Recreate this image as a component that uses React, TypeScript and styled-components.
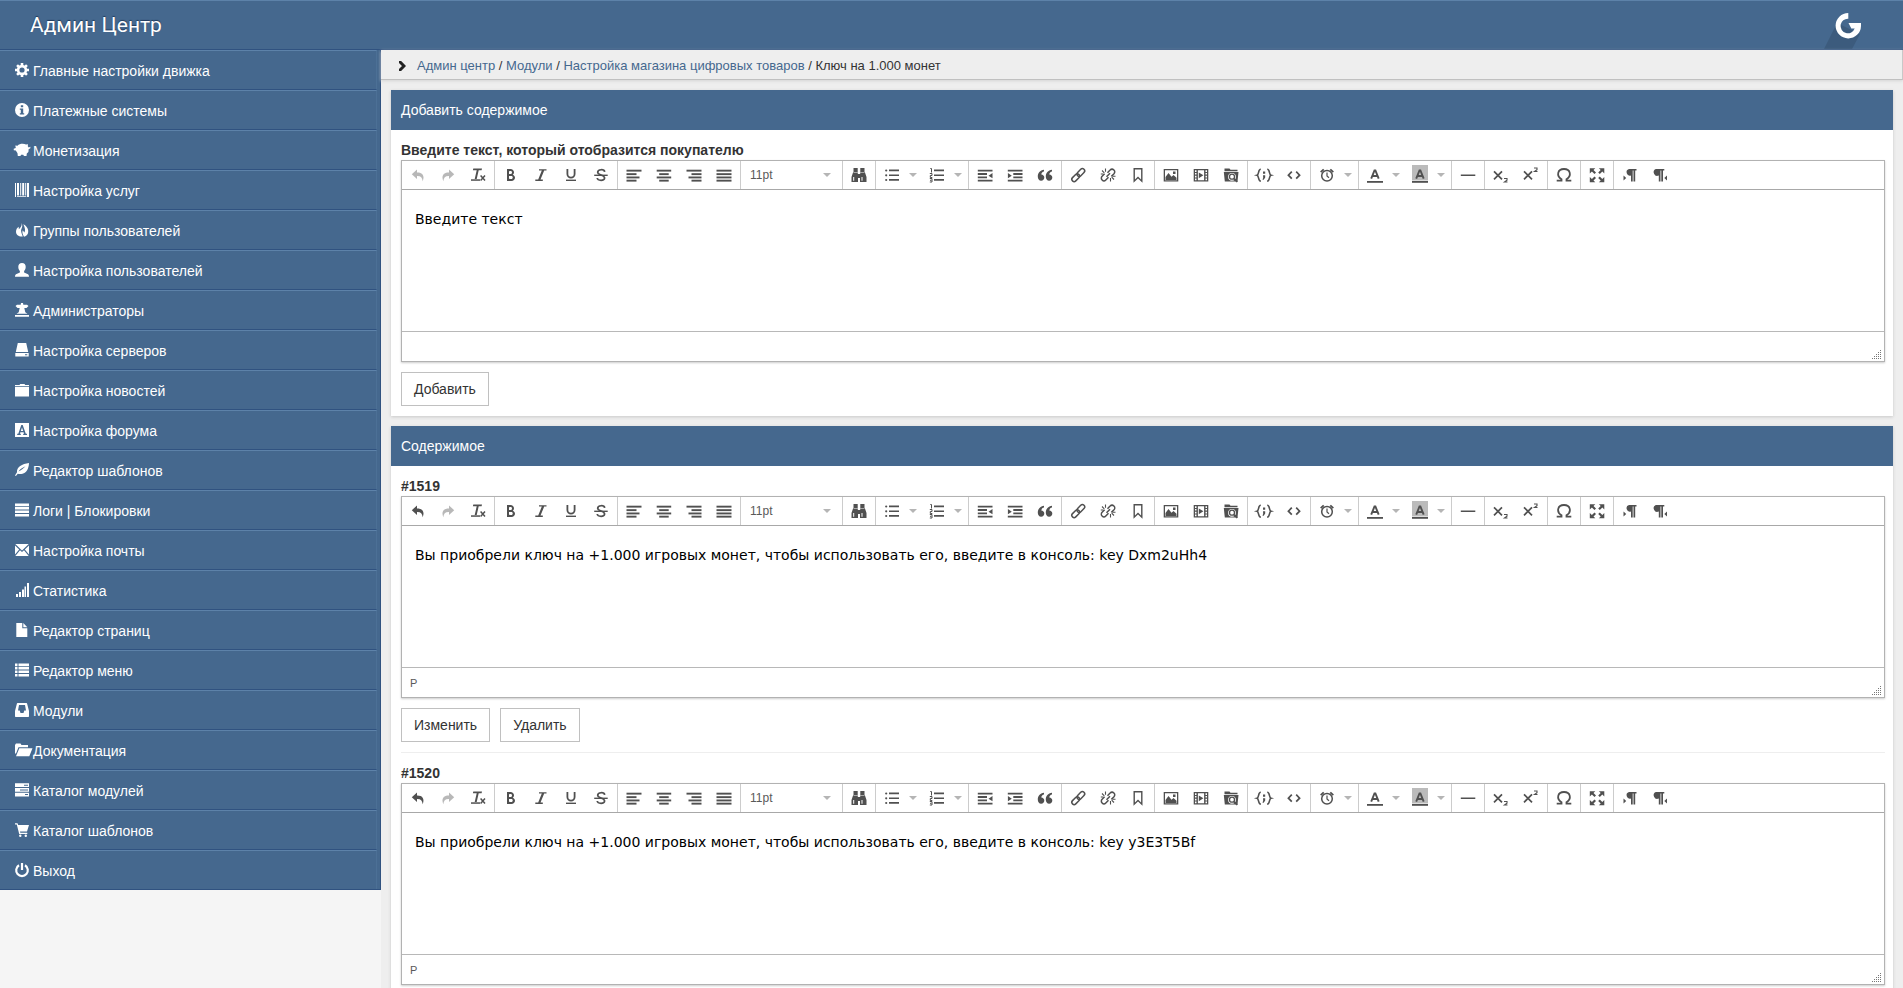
import React from "react";
import styled, { createGlobalStyle, css } from "styled-components";

const GlobalStyle = createGlobalStyle`
  *, *::before, *::after { box-sizing: border-box; }
  html { scrollbar-width: none; }
  body {
    margin: 0;
    background: #f5f5f5;
    color: #333;
    font-family: "Liberation Sans", Arial, sans-serif;
    font-size: 14px;
    line-height: 20px;
  }
  button, select, textarea { font: inherit; color: inherit; border-radius: 0; }
`;

const BLUE = "#45688e";
const LINE_LIGHT = "#5d82a9";
const LINE_DARK = "#305280";
const ICON = "#505050";

/* ---------- page frame ---------- */

const Page = styled.div`
  display: flex;
  flex-direction: column;
  min-height: 100vh;
`;

const Header = styled.header`
  display: flex;
  flex: none;
  align-items: center;
  justify-content: space-between;
  height: 50px;
  padding: 0 29px 0 30px;
  background: ${BLUE};
  border-top: 1px solid ${LINE_LIGHT};
  border-bottom: 1px solid ${LINE_DARK};
`;

const Brand = styled.a`
  color: #fff;
  font-family: Roboto, "Arial Narrow", sans-serif;
  font-size: 21px;
  line-height: 48px;
  text-decoration: none;
  text-shadow: 0 -1px 1px #1f3a5c;
`;

const LogoLink = styled.a`
  display: block;
  height: 48px;
`;

const Columns = styled.div`
  display: flex;
  flex: 1;
`;

const Sidebar = styled.nav`
  flex: none;
  width: 381px;
`;

const Menu = styled.ul`
  list-style: none;
  margin: 0;
  padding: 0 3px 0 0;
  background: ${BLUE};
  border-right: 1px solid ${LINE_DARK};
  border-bottom: 1px solid ${LINE_DARK};
`;

const MenuLink = styled.a`
  display: flex;
  align-items: center;
  gap: 4px;
  height: 40px;
  padding: 0 15px;
  color: #fff;
  text-decoration: none;
  border-top: 1px solid ${LINE_LIGHT};
  border-right: 1px solid #4c7096;
  border-bottom: 1px solid ${LINE_DARK};

  li:last-child > & { height: 39px; border-bottom: 0; }

  svg { flex: none; overflow: visible; }
`;

const MenuText = styled.span`
  padding-top: 2px;
`;

const Main = styled.main`
  flex: 1;
  min-width: 0;
  background: #eee;
`;

const Breadcrumb = styled.nav`
  display: flex;
  align-items: center;
  height: 30px;
  padding: 2px 18px 0;
  font-size: 13px;
  color: #333;
  border-right: 1px solid #c8c8c8;
  border-bottom: 1px solid #c0c0c0;
  box-shadow: 0 1px 3px #d4d4d4;

  svg { margin-right: 11px; }
  a { color: ${BLUE}; text-decoration: none; }
`;

const Separator = styled.span`
  white-space: pre;
`;

/* ---------- panels ---------- */

const Panel = styled.section`
  margin: 10px;
  background: #fff;
  box-shadow: 0 1px 3px #c8c8c8;
`;

const PanelTitle = styled.h2`
  margin: 0;
  padding: 10px;
  background: ${BLUE};
  color: #fff;
  font-size: 14px;
  font-weight: 400;
  line-height: 20px;
`;

const Entry = styled.div`
  margin: 0 8px 0 10px;
  padding: 10px 0;

  & + & { border-top: 1px solid #eee; }
`;

const EntryLabel = styled.label`
  display: block;
  font-weight: 700;
`;

const Actions = styled.div`
  display: flex;
  gap: 10px;
  margin-top: 10px;
`;

const Button = styled.button`
  height: 34px;
  padding: 0 12px;
  background: #fff;
  border: 1px solid #c0c0c0;
  cursor: pointer;
`;

/* ---------- editor ---------- */

const EditorBox = styled.div`
  border: 1px solid #b2b2b2;
  background: #fff;
  box-shadow: 0 1px 2px #ccc;
`;

const Toolbar = styled.div`
  display: flex;
  height: 29px;
  border-bottom: 1px solid #a8a8a8;
`;

const Group = styled.div`
  display: flex;
  align-items: stretch;
  padding: 0 1px;

  & + & { border-left: 1px solid #ccc; }
`;

const ToolButton = styled.button<{ $split?: boolean; $disabled?: boolean }>`
  display: flex;
  align-items: center;
  width: 30px;
  padding: 0 7px;
  background: none;
  border: 0;
  color: ${ICON};
  cursor: pointer;

  svg { flex: none; }

  ${(p) => p.$split && css`
    width: 45px;
    gap: 9px;
  `}
  ${(p) => p.$disabled && css`
    opacity: 0.4;
    cursor: default;
  `}
`;

const SizeField = styled.div`
  display: flex;
  align-items: center;
  width: 99px;
  padding-right: 10px;
`;

const SizeSelect = styled.select`
  appearance: none;
  flex: 1;
  height: 28px;
  padding: 0 8px;
  background: none;
  border: 0;
  outline: 0;
  color: #595959;
  font-size: 12px;
`;

const TextArea = styled.textarea`
  display: block;
  width: 100%;
  height: 141px;
  padding: 20px 13px;
  background: #fff;
  border: 0;
  outline: 0;
  resize: none;
  color: #000;
  font-family: "DejaVu Sans", Verdana, sans-serif;
  font-size: 14px;
  line-height: 18px;
`;

const StatusBar = styled.div`
  display: flex;
  align-items: center;
  justify-content: space-between;
  height: 30px;
  padding: 0 2px 0 8px;
  border-top: 1px solid #b8b8b8;
  color: #595959;
  font-size: 11px;

  svg { align-self: flex-end; margin-bottom: 1px; }
`;

/* ---------- drawings ---------- */

const Caret = () => (
  <svg width="8" height="4" viewBox="0 0 8 4" aria-hidden="true"><path d="M0 0h8L4 4z" fill="#b5b5b5" /></svg>
);

const Grip = () => (
  <svg width="11" height="11" viewBox="0 0 11 11" fill="#777" aria-hidden="true">
    {[0, 1, 2, 3, 4].map((row) =>
      Array.from({ length: row + 1 }, (_, i) => (
        <rect key={`${row}-${i}`} x={9 - i * 2} y={1 + row * 2} width="1" height="1" />
      ))
    )}
  </svg>
);

const Logo = () => (
  <svg width="50" height="48" viewBox="0 0 50 48" role="img" aria-label="G">
    <path d="M13 22L0 48H28L36 33z" fill="#3c5b7d" />
    <path d="M24.300 12V17.700a7.300 7.300 0 1 0 6.400 9.800H27.300L24.500 22H37V25A12.700 12.700 0 1 1 24.300 12z" fill="#fff" />
  </svg>
);

const tool = (body: React.ReactNode) => (
  <svg width="16" height="16" viewBox="0 0 16 16" fill="currentColor" overflow="visible" aria-hidden="true">{body}</svg>
);
const s = { fill: "none", stroke: "currentColor" } as const;
const rows = (list: [number, number, number][]) =>
  tool(list.map(([x, y, w], i) => <rect key={i} x={x} y={y} width={w} height="1.900" />));
const big = (d: string) => tool(<path transform="scale(.015625)" d={d} />);

const icons = {
  undo: tool(<path d="M1.800 7.200L7 2.500V5.400C12.500 5.300 15 8.700 12.600 14.300 12.500 10.500 10.500 8.900 7 9.100V12z" />),
  redo: tool(<path d="M14.200 7.200L9 2.500V5.400C3.500 5.300 1 8.700 3.400 14.300 3.500 10.500 5.500 8.900 9 9.100V12z" />),
  clear: tool(<><path d="M3.300 1.500H12L11.600 3.300H8.700L6.700 12H4.700L6.700 3.300H2.900z" /><path d="M1 12.300h9v1.500H1z" /><path {...s} strokeWidth="1.500" d="M10.600 8.600l4.400 4.900M15 8.600l-4.400 4.900" /></>),
  bold: big("M625.442 494.182c48.074-38.150 78.558-94.856 78.558-158.182 0-114.876-100.290-208-224-208h-224v768h288c123.712 0 224-93.124 224-208 0-88.196-59.118-163.562-142.558-193.818zM384 304c0-26.510 21.490-48 48-48h67.204c42.414 0 76.796 42.980 76.796 96s-34.382 96-76.796 96h-115.204v-144zM547.200 768h-115.200c-26.510 0-48-21.490-48-48v-144h163.200c42.418 0 76.800 42.980 76.800 96s-34.382 96-76.800 96z"),
  italic: tool(<path d="M6 2.200h7.500v1.400h-2.300L7.500 12.600h2.300V14H2.300v-1.400h2.900L8.800 3.600H6z" />),
  underline: tool(<><path {...s} strokeWidth="1.800" d="M4.400 2v5a3.600 3.600 0 0 0 7.200 0V2" /><path d="M3 12.600h10V14H3z" /></>),
  strike: tool(<><path {...s} strokeWidth="1.700" d="M11.700 4.800C11.300 2 4.700 1.900 4.700 5.300 4.700 8.400 11.600 7.500 11.600 10.900 11.600 14.200 4.600 14 4.200 11" /><path d="M1.200 7.600h13.500v1.400H1.200z" /></>),
  left: rows([[0.5, 2.7, 15], [0.5, 6.2, 10], [0.5, 9.5, 13], [0.5, 12.7, 10]]),
  center: rows([[0.7, 2.7, 14.5], [3.2, 6.2, 9.5], [0.7, 9.5, 14.5], [3.2, 12.7, 9.5]]),
  right: rows([[0.5, 2.7, 15], [5.5, 6.2, 10], [2.5, 9.5, 13], [5.5, 12.7, 10]]),
  justify: rows([[0.5, 2.7, 15], [0.5, 6.2, 15], [0.5, 9.5, 15], [0.5, 12.7, 15]]),
  find: tool(<path fillRule="evenodd" d="M2.500 1h4.200v4.500H2.500zM9.300 1h4.200v4.500H9.300zM2.200 5h4.600v2h2.400V5h4.600L15.500 10v5H9v-4H7v4H.5v-5zM2.200 10v3.700h1V10zM10.500 10v3.700h1V10z" />),
  bullets: tool(<><circle cx="2.200" cy="3.500" r="1.100" /><circle cx="2.200" cy="8.300" r="1.100" /><circle cx="2.200" cy="13" r="1.100" /><path d="M5 2.600h10v1.700H5zM5 7.400h10v1.700H5zM5 12.100h10v1.700H5z" /></>),
  numbers: tool(<><path {...s} strokeWidth="1" d="M1.300 1.500h1.200v4M.8 6.500h2.200v2h-1.700v2h2M.8 11.500h2.200v3.500h-2.200M1 13.300h1.500" /><path d="M5 2.600h10v1.700H5zM5 7.400h10v1.700H5zM5 12.100h10v1.700H5z" /></>),
  outdent: tool(<path d="M.8 2.700h14.700v1.900H.8zM.8 6.100H10V8H.8zM.8 9.400H10v1.900H.8zM.8 12.700h14.700v1.900H.8zM15.500 6v5.300L11.500 8.700z" />),
  indent: tool(<path d="M.8 2.700h14.700v1.900H.8zM6.300 6.100h9.200V8H6.300zM6.300 9.400h9.200v1.900H6.300zM.8 12.700h14.700v1.900H.8zM.9 6v5.300l3.900-2.600z" />),
  quote: tool(<path d="M7 2.800C3 3.300.8 6 .8 9.700c0 2.300 1.400 4 3.300 4s3.200-1.300 3.200-3.200S6 7.500 4.300 7.400C4.500 5.800 5.500 4.800 7 4.500zM15 2.800c-4 .5-6.200 3.200-6.200 6.900 0 2.300 1.400 4 3.300 4s3.200-1.300 3.200-3.200-1.300-3-3-3.100c.2-1.600 1.200-2.600 2.700-2.900z" />),
  link: tool(<g {...s} strokeWidth="1.500"><rect x="6.300" y="3.200" width="9" height="4.600" rx="2.300" transform="rotate(-45 10.800 5.500)" /><rect x="1.200" y="8.400" width="9" height="4.600" rx="2.300" transform="rotate(-45 5.700 10.700)" /></g>),
  unlink: tool(<g {...s} strokeWidth="1.500"><path d="M7.500 5.700l2.600-2.600a2.600 2.600 0 0 1 3.900 3.700l-2.600 2.600M8.500 10.300l-2.700 2.700a2.600 2.600 0 0 1-3.700-3.700l2.500-2.500M6.500 9.800l3.500-3.500" /><path strokeWidth="1.100" d="M5.500 4.800V1.500M4.300 5.800L2 3.500M3.300 7H.8M10.500 11v3.500M11.700 10.200l2.300 2.300M12.500 9.200h3" /></g>),
  anchor: tool(<path {...s} strokeWidth="1.400" d="M4.200 1.700h7.600v12.500L8 10.500l-3.800 3.700z" />),
  image: tool(<path fillRule="evenodd" d="M.7 2h14.600v12.500H.7zM2 3.300v9.900h12V3.300zM2.500 13V10l3-4 3 3.700 2-1.700 3 2.700V13zM10 4.500h2.500V7H10z" />),
  media: tool(<path fillRule="evenodd" d="M.7 2h14.600v12.500H.7zM2 3.300v1.600h1.500V3.300zM2 6v1.600h1.500V6zM2 8.800v1.600h1.500V8.800zM2 11.600v1.600h1.500v-1.600zM12.500 3.300v1.600H14V3.300zM12.500 6v1.600H14V6zM12.500 8.800v1.600H14V8.800zM12.500 11.600v1.600H14v-1.600zM4.900 3.300v9.900h6.200V3.300zM5.800 5.400l4.600 2.900-4.600 2.900z" />),
  browse: tool(<><path fillRule="evenodd" d="M1.500 1.500h5l1 1.200h7v1.500h-13zM.8 5h14.700l-1 9.500H1.800zM9 5.900a3.900 3.900 0 1 0 0 7.800 3.900 3.900 0 1 0 0-7.800z" /><circle {...s} strokeWidth="1.300" cx="9" cy="9.700" r="2.500" /><path {...s} strokeWidth="1.700" d="M10.800 11.500l3.500 3.300" /></>),
  sample: tool(<><path {...s} strokeWidth="1.600" d="M4.800 2.300c-3 0-1.500 5.300-3.800 5.900 2.300.6.800 5.900 3.800 5.900M11.200 2.300c3 0 1.500 5.300 3.800 5.900-2.300.6-.8 5.900-3.800 5.900" /><path d="M7 4.500h2.200v2.200H7zM7 8.200h2.200v2.300L7.700 12.700H6.500L7.200 10.500z" /></>),
  code: tool(<path {...s} strokeWidth="1.700" d="M5.800 4.700L2.400 8.200l3.400 3.500M10.200 4.700l3.400 3.500-3.400 3.500" />),
  clock: tool(<g {...s}><circle cx="8" cy="8.700" r="5.300" strokeWidth="1.500" /><path strokeWidth="1.200" d="M8 5.500V9l2 1.700" /><path strokeWidth="1.800" d="M1.700 5.200L4.700 2.300M14.300 5.200l-3-2.900" /></g>),
  fore: tool(<><path {...s} strokeWidth="1.900" d="M4.200 11.700L7.500 3.500h.9l3.300 8.200M5.500 9h4.900" /><path d="M0 14h16v1.800H0z" /></>),
  back: tool(<><path fill="#bbb" d="M0-2h16v15.500H0z" /><path {...s} strokeWidth="1.900" d="M4.200 11.700L7.500 3.500h.9l3.300 8.200M5.500 9h4.900" /><path d="M0 14h16v1.800H0z" /></>),
  rule: tool(<path d="M.8 7.500h14.500v1.500H.8z" />),
  sub: tool(<><path {...s} strokeWidth="1.700" d="M1 4.300l8 8M9 4.300l-8 8" /><path {...s} strokeWidth="1.100" d="M11 11.500h3v1.700L11.500 15h3" /></>),
  sup: tool(<><path {...s} strokeWidth="1.700" d="M1 4.300l8 8M9 4.300l-8 8" /><path {...s} strokeWidth="1.100" d="M11 1h3v1.700L11.500 4.500h3" /></>),
  omega: tool(<path {...s} strokeWidth="1.800" d="M.7 13.700h4.800v-1.500C.1 9 1.400 2 8 2s7.900 7 2.500 10.200v1.500h4.800" />),
  full: tool(<path d="M.8 1.200h5.500L4.500 3 7 5.500 5.500 7.100 2.900 4.500.8 6.500zM15.300 1.200v5.300l-2-2-2.500 2.600L9.200 5.500 11.700 3 9.800 1.200zM.8 15.200V10l2.100 1.900L5.500 9.400 7 10.900l-2.500 2.500 1.800 1.800zM15.300 15.200H9.800l1.900-1.800-2.500-2.500 1.600-1.500 2.500 2.500 2-1.900z" />),
  ltr: tool(<path d="M7 2h7.500v1.500h-1.300V14.500H11.500V3.500h-.8V14.500H9V8.500A3.300 3.300 0 0 1 7 2zM1.500 8.500v5l2.700-2.500z" />),
  rtl: tool(<path d="M3.800 2h8.500v1.500H11V14.500H9.300V3.500h-.8V14.500H6.800V8.500A3.300 3.300 0 0 1 3.800 2zM15 8.500v5L12.300 11z" />),
};

const glyph = (body: React.ReactNode) => (
  <svg width="14" height="14" viewBox="0 0 14 14" fill="#fff" aria-hidden="true">{body}</svg>
);
const w = { fill: "none", stroke: "#fff" } as const;

const menu: [string, React.ReactNode][] = [
  ["Главные настройки движка", glyph(<><circle {...w} cx="7" cy="7" r="3.900" strokeWidth="2.600" />{[0, 45, 90, 135].map((a) => <path key={a} transform={`rotate(${a} 7 7)`} d="M5.700 0h2.600v2.500H5.700zM5.700 11.500h2.600V14H5.700z" />)}</>)],
  ["Платежные системы", glyph(<path fillRule="evenodd" d="M7 0a7 7 0 1 1 0 14A7 7 0 0 1 7 0zM5.800 2.300v2h2.400v-2zM4.800 5.500v1.200h1v3.500h-1v1.200h4.400v-1.200h-1V5.500z" />)],
  ["Монетизация", glyph(<path d="M-1.300 5.800L.8 5 .3 2.500 2.500 2.700C4.500.3 9 .2 11 1.500l2-.3-.2 2 .9 1.300 1.800-.7-.3 1.600-1.500.7-.3 3-1.600 1.500L11.500 13H9l-.8-1.300H6L5.500 13H2.800l-.3-2.700L.8 7.500l-2-.2z" />)],
  ["Настройка услуг", glyph(<path d="M0 0h1v14H0zM2 0h2v12.500H2zM5.200 0h1v12.500h-1zM7.200 0h2v12.500h-2zM10.200 0h1v12.500h-1zM12 0h2v14h-2zM2 13.200h9.200v.8H2z" />)],
  ["Группы пользователей", glyph(<path d="M6.700 0c1 2.700.6 4.300-.4 6.300-.8 2 .5 4.500 1.500 7.200C4 14 1 11.800 1 8.700 1 6.600 2 4.800 3.700 3.800l.1 2.400C5.700 4.700 7 2.700 6.700 0zM8.300 1.200C12.300 3.300 14 6.800 13 10.300c-.7 2-2.100 3-4 3.400C7.700 11.500 6.800 9 7.800 7.200l1.500 2.300C10.800 7.500 9.800 4.300 8.300 1.200z" />)],
  ["Настройка пользователей", glyph(<path d="M7 0c2.400 0 3.700 1.500 3.700 3.700 0 2-.7 3.300-1.600 4.300v1.500l3.900 1.700c.7.400 1 1.300 1 2.600H0c0-1.300.3-2.200 1-2.600l3.900-1.700V8c-.9-1-1.600-2.300-1.600-4.300C3.300 1.500 4.600 0 7 0z" />)],
  ["Администраторы", glyph(<path d="M6 0h2l.3 1.700H12l1.500 1.200-2 2H9.300l1 4.300 2.200 1.500H1.500l2.200-1.500 1-4.300H2.500l-2-2L2 1.700h3.700zM0 12h14v1.700H0z" />)],
  ["Настройка серверов", glyph(<path fillRule="evenodd" d="M2.800 0h8.400l2 9H.8zM.3 10h13.400v3.500H.3zM10 11.300v1h2.300v-1z" />)],
  ["Настройка новостей", glyph(<path d="M0 2h4.500l.7-1h4.300l.7 1H14v1.300H0zM0 4h14v9.500H0z" />)],
  ["Настройка форума", glyph(<path fillRule="evenodd" d="M0 0h14v14H0zM6.300 2L3.300 10.800H2.200v1.200h3.600v-1.200H4.900l.5-1.600h3.200l.5 1.600H8.200V12h3.800v-1.200h-1.200L7.700 2zM7 4.500l1.200 3.500H5.800z" />)],
  ["Редактор шаблонов", glyph(<path fillRule="evenodd" d="M14 0c-.3 6-2.500 10-6.500 10.700-2 .4-3.500.2-4.700 0L.9 13 0 12.500l2-3.200C1.500 4 7 .8 14 0zM3.500 8.500C6 7.300 8.500 5.500 10.500 3.300 8 4.500 5.500 5.500 3.500 8.500z" />)],
  ["Логи | Блокировки", glyph(<path d="M0 .6h14v2.600H0zM0 4h14v2.600H0zM0 7.500h14v2.600H0zM0 11h14v2.600H0z" />)],
  ["Настройка почты", glyph(<path d="M.3 1h13.400L7 7.500zM0 2.500L4.200 6.500 0 11.500zM14 2.500L9.800 6.500 14 11.500zM5 7.300l2 1.700 2-1.700 4.700 5.700H.3z" />)],
  ["Статистика", glyph(<path d="M1 11h2v3H1zM4 9h2v5H4zM7 6.500h2V14H7zM9.500 3.500H11V14H9.500zM12 0h2v14h-2z" />)],
  ["Редактор страниц", glyph(<path d="M1.300 0h6v5.300h5V14h-11zM8.300 0l4 4.300h-4z" />)],
  ["Редактор меню", glyph(<path d="M0 .6h2.500v2.600H0zM3.500 .6H14v2.600H3.500zM0 4h2.500v2.600H0zM3.500 4H14v2.600H3.500zM0 7.500h2.500v2.600H0zM3.500 7.500H14v2.600H3.500zM0 11h2.500v2.600H0zM3.500 11H14v2.600H3.500z" />)],
  ["Модули", glyph(<path fillRule="evenodd" d="M3 0h8c.8 0 1 .4 1.200 1L14 8v5c0 .7-.3 1-1 1H1c-.7 0-1-.3-1-1V8l1.800-7C2 .4 2.200 0 3 0zM4 2L3 7.500h1.700L5.500 10h3l.8-2.500H11L10 2z" />)],
  ["Документация", glyph(<path d="M0 2L1 .5h4.500l1 1.500h6.500V4.300H3.500L1 10.500H0zM4.300 5.200H17.500L14.300 13.300H1z" />)],
  ["Каталог модулей", glyph(<path fillRule="evenodd" d="M0 .3h14v3.700H0zM9 1.700v1h4v-1zM0 5h14v3.700H0zM5 6.400v1h8v-1zM0 9.700h14v3.700H0zM10 11.100v1h3v-1z" />)],
  ["Каталог шаблонов", glyph(<><path d="M0 .3h2.500l.7 1.700H14l-2 6.500H5l.3 1.200h7v1.200H4.200L1.800 1.500H0z" /><circle cx="5.300" cy="12.700" r="1.200" /><circle cx="10.800" cy="12.700" r="1.200" /></>)],
  ["Выход", glyph(<><path {...w} strokeWidth="2.200" d="M4 2.300a5.800 5.800 0 1 0 6 0" /><path d="M5.900 0h2.200v7H5.900z" /></>)],
];

/* ---------- editor ---------- */

type Tool = { icon: keyof typeof icons; label: string; split?: boolean };
const t = (icon: keyof typeof icons, label: string, split = false): Tool => ({ icon, label, split });

const firstGroups: Tool[][] = [
  [t("undo", "Вернуть"), t("redo", "Отменить"), t("clear", "Очистить формат")],
  [t("bold", "Полужирный"), t("italic", "Курсив"), t("underline", "Подчеркнутый"), t("strike", "Зачеркнутый")],
  [t("left", "По левому краю"), t("center", "По центру"), t("right", "По правому краю"), t("justify", "По ширине")],
];
const lastGroups: Tool[][] = [
  [t("find", "Найти и заменить")],
  [t("bullets", "Маркированный список", true), t("numbers", "Нумерованный список", true)],
  [t("outdent", "Уменьшить отступ"), t("indent", "Увеличить отступ"), t("quote", "Цитата")],
  [t("link", "Вставить ссылку"), t("unlink", "Удалить ссылку"), t("anchor", "Якорь")],
  [t("image", "Изображение"), t("media", "Видео"), t("browse", "Файлы")],
  [t("sample", "Пример кода"), t("code", "Исходный код")],
  [t("clock", "Дата и время", true)],
  [t("fore", "Цвет текста", true), t("back", "Цвет фона", true)],
  [t("rule", "Горизонтальная линия")],
  [t("sub", "Нижний индекс"), t("sup", "Верхний индекс")],
  [t("omega", "Специальный символ")],
  [t("full", "Полноэкранный режим")],
  [t("ltr", "Слева направо"), t("rtl", "Справа налево")],
];

const ToolGroup = ({ tools, faded }: { tools: Tool[]; faded: string[] }) => (
  <Group>
    {tools.map(({ icon, label, split }) => (
      <ToolButton key={icon} type="button" title={label} aria-label={label} $split={split} $disabled={faded.includes(icon)}>
        {icons[icon]}
        {split && <Caret />}
      </ToolButton>
    ))}
  </Group>
);

const Editor = ({ id, text, path, canUndo }: { id: string; text: string; path?: string; canUndo?: boolean }) => {
  const faded = canUndo ? ["redo"] : ["undo", "redo"];
  return (
    <EditorBox>
      <Toolbar role="toolbar">
        {firstGroups.map((g) => <ToolGroup key={g[0].icon} tools={g} faded={faded} />)}
        <Group>
          <SizeField>
            <SizeSelect aria-label="Размер шрифта" defaultValue="11pt"><option>11pt</option></SizeSelect>
            <Caret />
          </SizeField>
        </Group>
        {lastGroups.map((g) => <ToolGroup key={g[0].icon} tools={g} faded={faded} />)}
      </Toolbar>
      <TextArea id={id} defaultValue={text} spellCheck={false} />
      <StatusBar>
        <span>{path}</span>
        <Grip />
      </StatusBar>
    </EditorBox>
  );
};

const keys = [
  { id: "1519", code: "Dxm2uHh4", actions: ["Изменить", "Удалить"] },
  { id: "1520", code: "y3E3T5Bf", actions: [] },
];

export default function App() {
  return (
    <Page>
      <GlobalStyle />
      <Header>
        <Brand href="#">Админ Центр</Brand>
        <LogoLink href="#"><Logo /></LogoLink>
      </Header>
      <Columns>
        <Sidebar>
          <Menu>
            {menu.map(([name, icon]) => (
              <li key={name}><MenuLink href="#">{icon}<MenuText>{name}</MenuText></MenuLink></li>
            ))}
          </Menu>
        </Sidebar>
        <Main>
          <Breadcrumb>
            <svg width="7" height="10" viewBox="0 0 7 10" aria-hidden="true"><path d="M0 0l5 5-5 5" fill="none" stroke="#222" strokeWidth="3" /></svg>
            <a href="#">Админ центр</a><Separator> / </Separator>
            <a href="#">Модули</a><Separator> / </Separator>
            <a href="#">Настройка магазина цифровых товаров</a><Separator> / </Separator>
            <span>Ключ на 1.000 монет</span>
          </Breadcrumb>
          <Panel>
            <PanelTitle>Добавить содержимое</PanelTitle>
            <Entry>
              <EntryLabel htmlFor="new">Введите текст, который отобразится покупателю</EntryLabel>
              <Editor id="new" text="Введите текст" />
              <Actions><Button type="button">Добавить</Button></Actions>
            </Entry>
          </Panel>
          <Panel>
            <PanelTitle>Содержимое</PanelTitle>
            {keys.map(({ id, code, actions }) => (
              <Entry key={id}>
                <EntryLabel htmlFor={`key-${id}`}>#{id}</EntryLabel>
                <Editor
                  id={`key-${id}`}
                  canUndo
                  path="P"
                  text={`Вы приобрели ключ на +1.000 игровых монет, чтобы использовать его, введите в консоль: key ${code}`}
                />
                {actions.length > 0 && (
                  <Actions>
                    {actions.map((name) => <Button key={name} type="button">{name}</Button>)}
                  </Actions>
                )}
              </Entry>
            ))}
          </Panel>
        </Main>
      </Columns>
    </Page>
  );
}
